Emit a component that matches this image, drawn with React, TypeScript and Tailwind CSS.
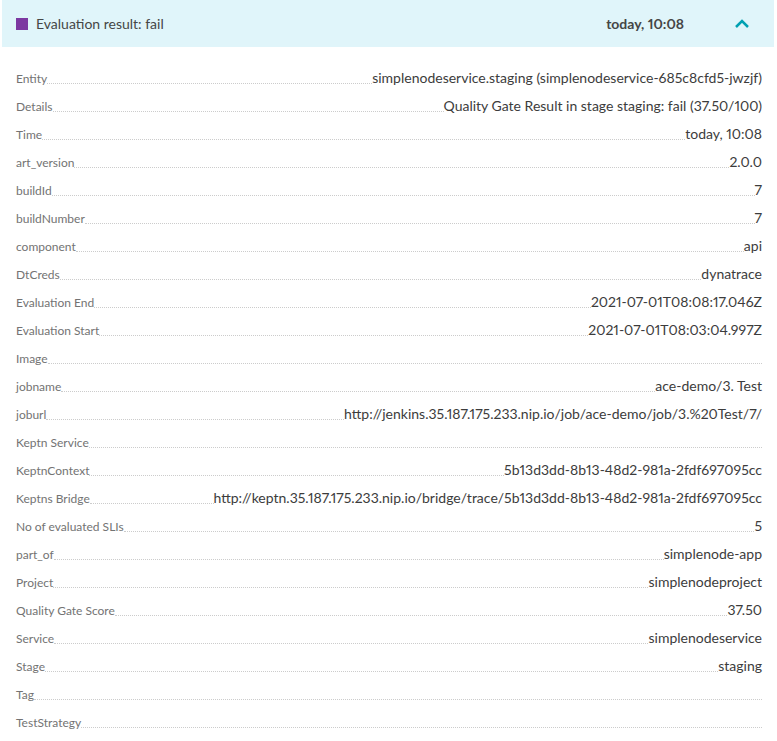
const rows: [string, string][] = [
  ["Entity", "simplenodeservice.staging (simplenodeservice-685c8cfd5-jwzjf)"],
  ["Details", "Quality Gate Result in stage staging: fail (37.50/100)"],
  ["Time", "today, 10:08"],
  ["art_version", "2.0.0"],
  ["buildId", "7"],
  ["buildNumber", "7"],
  ["component", "api"],
  ["DtCreds", "dynatrace"],
  ["Evaluation End", "2021-07-01T08:08:17.046Z"],
  ["Evaluation Start", "2021-07-01T08:03:04.997Z"],
  ["Image", ""],
  ["jobname", "ace-demo/3. Test"],
  ["joburl", "http://jenkins.35.187.175.233.nip.io/job/ace-demo/job/3.%20Test/7/"],
  ["Keptn Service", ""],
  ["KeptnContext", "5b13d3dd-8b13-48d2-981a-2fdf697095cc"],
  ["Keptns Bridge", "http://keptn.35.187.175.233.nip.io/bridge/trace/5b13d3dd-8b13-48d2-981a-2fdf697095cc"],
  ["No of evaluated SLIs", "5"],
  ["part_of", "simplenode-app"],
  ["Project", "simplenodeproject"],
  ["Quality Gate Score", "37.50"],
  ["Service", "simplenodeservice"],
  ["Stage", "staging"],
  ["Tag", ""],
  ["TestStrategy", ""],
];

function Row({ label, value }: { label: string; value: string }) {
  return (
    <div className="flex items-end h-[28px] pb-[5px]">
      <span className="text-[12px] leading-[16px] text-[#737373]">{label}</span>
      <div className="flex-1 border-b border-dotted border-[#cccccc] mb-[3px]" />
      <span className="text-[14px] leading-[18px] text-[#3c3c3c] whitespace-nowrap proportional-nums">{value}</span>
    </div>
  );
}

export default function App() {
  return (
    <div className="w-[777px] bg-white font-['Lato',sans-serif]">
      <div className="mx-[2px] mr-[3px] h-[47px] bg-[#e0f5fa] flex items-center pl-[14px] pr-[24px]">
        <span className="w-[12px] h-[12px] bg-[#7c38a1]" />
        <span className="ml-[8px] text-[14px] text-[#454646]">Evaluation result: fail</span>
        <span className="ml-auto text-[14px] font-bold text-[#454646] proportional-nums">today, 10:08</span>
        <svg className="ml-[50px]" width="16" height="10" viewBox="0 0 16 10">
          <path d="M2 8 L8 2 L14 8" stroke="#00a1b2" strokeWidth="2.5" fill="none" />
        </svg>
      </div>
      <div className="pt-[17px] pl-[16px] pr-[15px]">
        {rows.map(([l, v]) => (
          <Row key={l} label={l} value={v} />
        ))}
      </div>
    </div>
  );
}
